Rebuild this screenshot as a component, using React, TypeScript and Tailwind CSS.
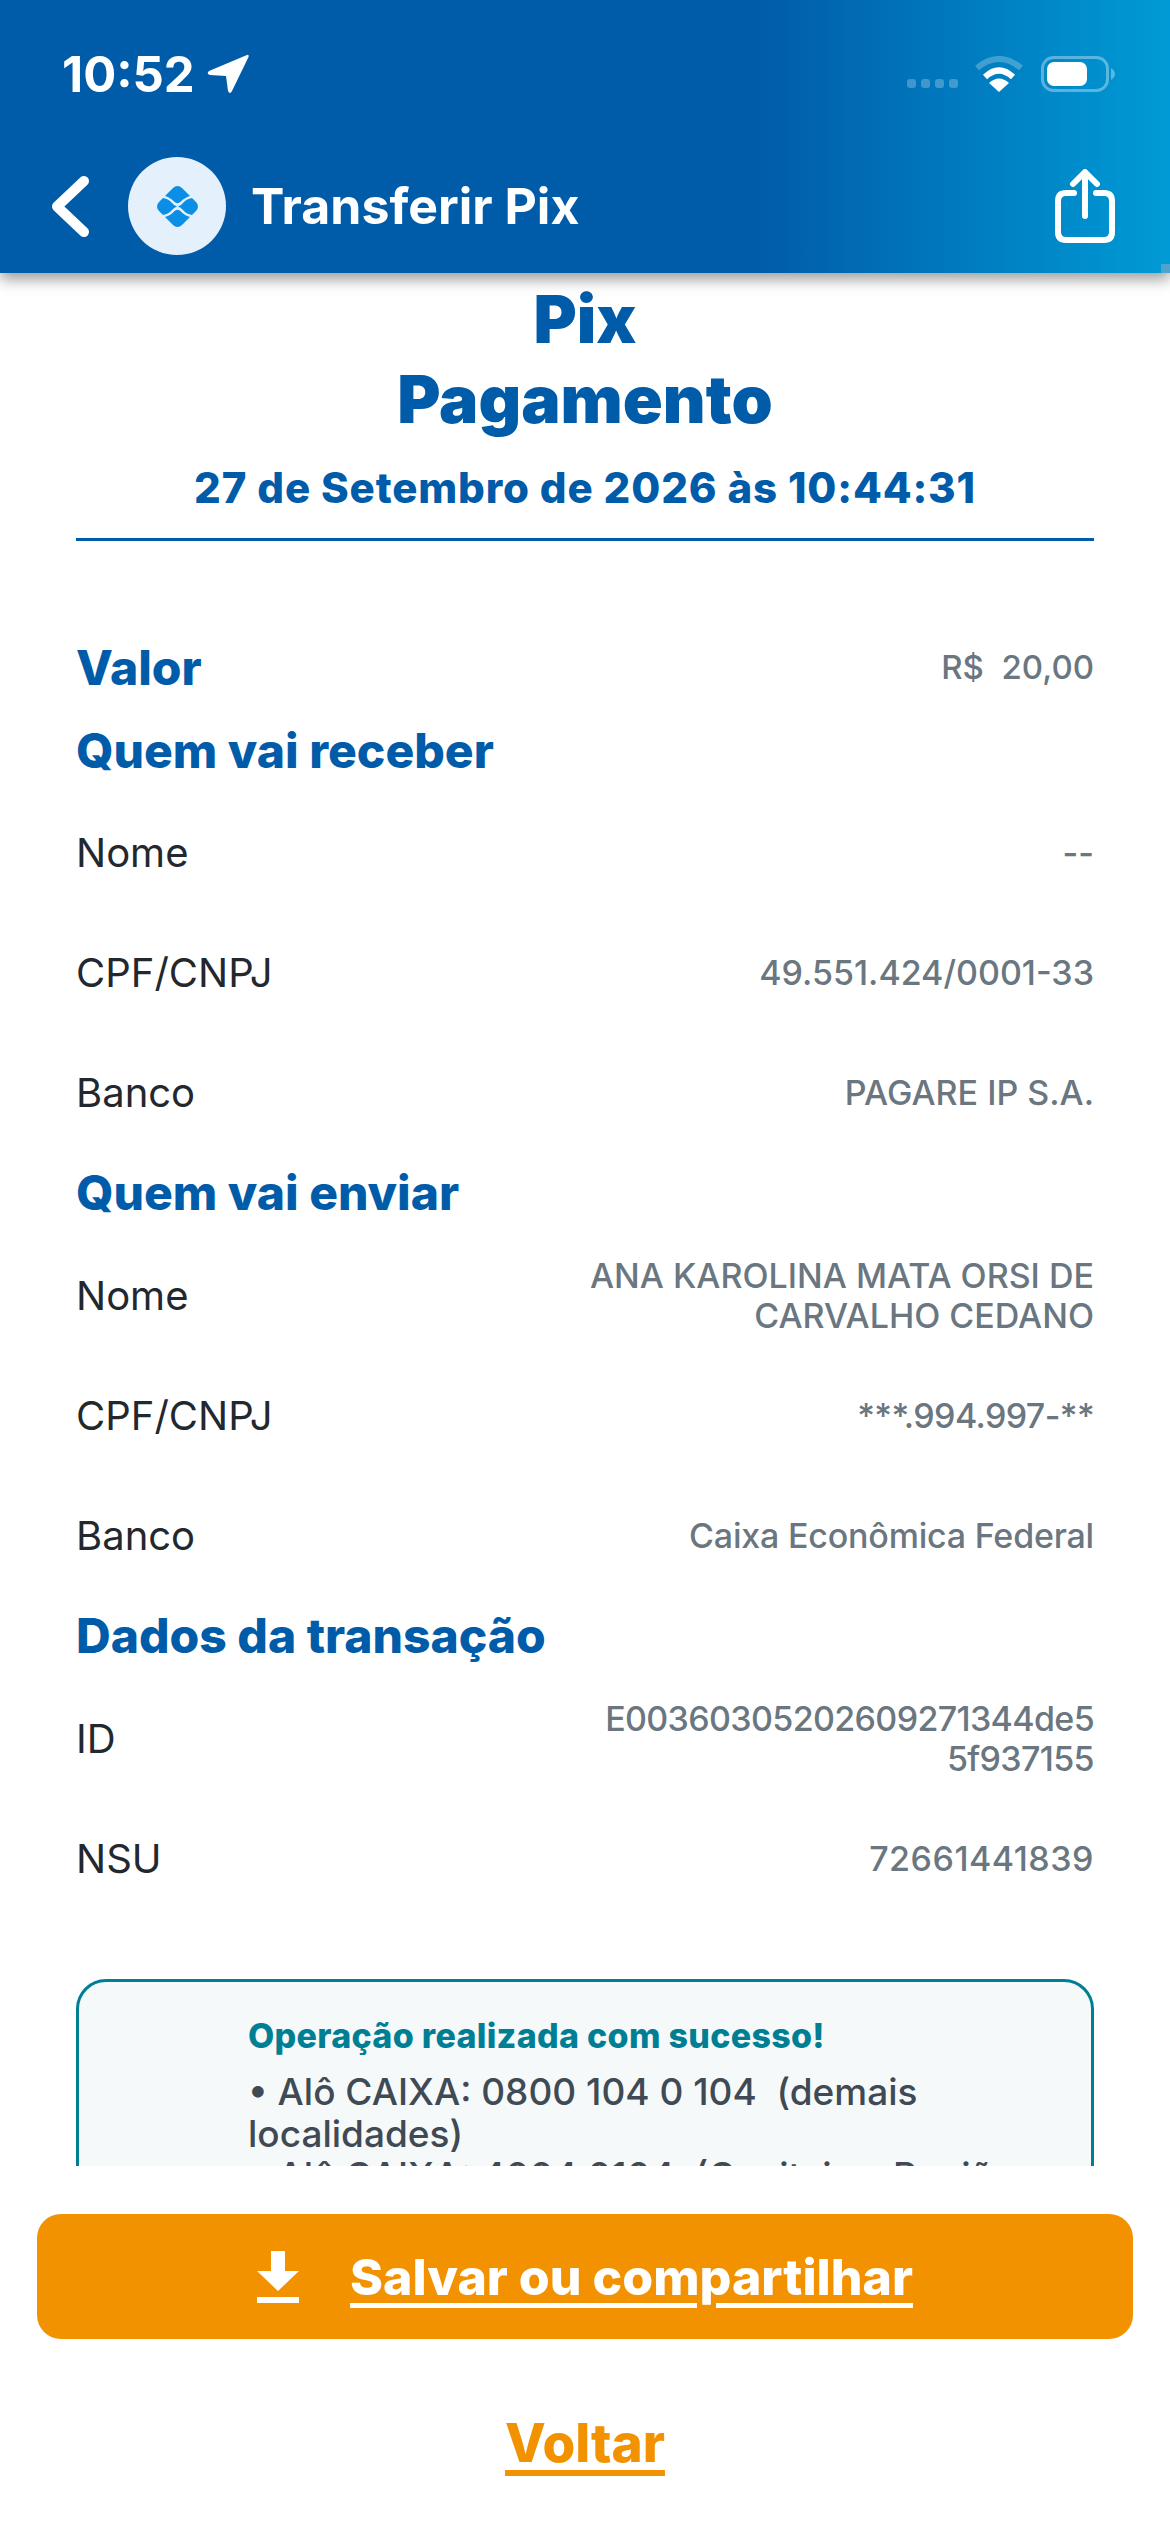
const Row = ({ label, value, cls = "" }: { label: string; value: string; cls?: string }) => (
  <div className="flex h-[120px] items-center justify-between">
    <span className="text-[40px] leading-[48px] text-[#22282e]">{label}</span>
    <span className={`w-[560px] text-right text-[34px] font-medium leading-[40px] text-[#6a7680] ${cls}`}>{value}</span>
  </div>
);

const Section = ({ children }: { children: string }) => (
  <h2 className="text-[48px] font-extrabold leading-[56px] text-[#005ca9]">{children}</h2>
);

export default function App() {
  return (
    <div className="relative flex h-[2532px] w-[1170px] flex-col overflow-hidden bg-white font-['Inter',sans-serif]">
      <header className="relative z-10 h-[273px] shrink-0 bg-gradient-to-r from-[#005ca9] from-65% to-[#009bd6] shadow-[0_6px_14px_rgba(0,0,0,0.4)]">
        <div className="flex h-[122px] items-center justify-between pl-[62px] pr-[55px] pt-[26px]">
          <div className="flex items-center gap-[12px]">
            <span className="text-[49px] font-bold leading-none text-white">10:52</span>
            <svg width="42" height="40" viewBox="0 0 42 40"><path d="M40 1 Q42 0 41.5 3 L25 37 Q23 41 21 37 L19 22 L3 21 Q-1 20 2 17 Z" fill="#fff" /></svg>
          </div>
          <div className="flex items-center">
            <div className="mt-[18px] flex gap-[5px]">
              {[0, 1, 2, 3].map((i) => (
                <span key={i} className="h-[9px] w-[9px] rounded-[3px] bg-white/25" />
              ))}
            </div>
            <svg className="ml-[17px]" width="48" height="37" viewBox="0 0 48 37" fill="none">
              <path d="M2 12 Q24 -6 46 12" stroke="#fff" strokeOpacity="0.25" strokeWidth="6" />
              <path d="M10 21 Q24 8 38 21" stroke="#fff" strokeWidth="6" />
              <path d="M24 36 L14 27 Q24 18 34 27 Z" fill="#fff" />
            </svg>
            <svg className="ml-[18px]" width="74" height="36" viewBox="0 0 74 36" fill="none">
              <rect x="1.5" y="1.5" width="65" height="33" rx="11" stroke="#fff" strokeOpacity="0.35" strokeWidth="3" />
              <rect x="6" y="6" width="40" height="24" rx="7" fill="#fff" />
              <path d="M70 12 Q74 15 74 18 Q74 21 70 24 Z" fill="#fff" fillOpacity="0.35" />
            </svg>
          </div>
        </div>
        <div className="flex h-[122px] items-center justify-between pl-[52px] pr-[55px] pt-[46px]">
          <div className="flex items-center">
            <svg width="37" height="61" viewBox="0 0 37 61" fill="none">
              <path d="M32 5 L5 30.5 L32 56" stroke="#fff" strokeWidth="10" strokeLinecap="round" strokeLinejoin="round" />
            </svg>
            <div className="ml-[39px] flex h-[98px] w-[98px] items-center justify-center rounded-full bg-[#e4f0fc]">
              <svg width="41" height="41" viewBox="0 0 41 41" fill="#0a8ee6">
                <path d="M20.5 0 Q23 0 25 2 L33 10 Q27 12 24 15.5 Q20.5 19 17 15.5 Q14 12 8 10 L16 2 Q18 0 20.5 0 Z" />
                <path d="M20.5 41 Q23 41 25 39 L33 31 Q27 29 24 25.5 Q20.5 22 17 25.5 Q14 29 8 31 L16 39 Q18 41 20.5 41 Z" />
                <path d="M6 12 Q12 13 15 17 Q17.5 20 20 20.5 Q17.5 21 15 24 Q12 28 6 29 L2 25 Q0 23 0 20.5 Q0 18 2 16 Z" />
                <path d="M35 12 Q29 13 26 17 Q23.5 20 21 20.5 Q23.5 21 26 24 Q29 28 35 29 L39 25 Q41 23 41 20.5 Q41 18 39 16 Z" />
              </svg>
            </div>
            <span className="ml-[25px] text-[50px] font-bold leading-none text-white">Transferir Pix</span>
          </div>
          <svg width="60" height="74" viewBox="0 0 60 74" fill="none" stroke="#fff" strokeWidth="6" strokeLinecap="round" strokeLinejoin="round">
            <path d="M19 24 H11 Q3 24 3 32 V63 Q3 71 11 71 H49 Q57 71 57 63 V32 Q57 24 49 24 H41" />
            <path d="M30 47 V4" />
            <path d="M18 15 L30 3 L42 15" />
          </svg>
        </div>
        <span className="absolute bottom-0 right-0 h-[9px] w-[9px] bg-[#4fa3cf]" />
      </header>

      <main className="min-h-0 flex-1 overflow-hidden px-[76px]">
        <div className="pt-[6px] text-center text-[#005ca9]">
          <h1 className="text-[66px] font-black leading-[80px]">Pix</h1>
          <h1 className="text-[66px] font-black leading-[80px]">Pagamento</h1>
          <p className="mt-[21px] text-[42px] font-extrabold leading-[56px] tracking-[0.85px]">27 de Setembro de 2026 às 10:44:31</p>
        </div>
        <div className="mt-[22px] h-[3px] bg-[#005ca9]" />
        <div className="mt-[99px] flex items-center justify-between">
          <Section>Valor</Section>
          <span className="text-[33px] font-medium text-[#6a7680]">R$&nbsp; 20,00</span>
        </div>
        <div className="mt-[27px]"><Section>Quem vai receber</Section></div>
        <div className="mt-[14px]">
          <Row label="Nome" value="--" />
          <Row label="CPF/CNPJ" value="49.551.424/0001-33" />
          <Row label="Banco" value="PAGARE IP S.A." />
        </div>
        <div className="mt-[12px]"><Section>Quem vai enviar</Section></div>
        <div className="mt-[15px]">
          <Row label="Nome" value="ANA KAROLINA MATA ORSI DE CARVALHO CEDANO" />
          <Row label="CPF/CNPJ" value="***.994.997-**" cls="tracking-[-0.6px]" />
          <Row label="Banco" value="Caixa Econômica Federal" cls="tracking-[-0.2px]" />
        </div>
        <div className="mt-[12px]"><Section>Dados da transação</Section></div>
        <div className="mt-[15px]">
          <Row label="ID" value="E00360305202609271344de5 5f937155" cls="tracking-[-0.65px]" />
          <Row label="NSU" value="72661441839" cls="tracking-[0.5px]" />
        </div>
        <div className="mt-[60px] rounded-[30px] border-[3px] border-[#007f94] bg-[#f5f9fa] pl-[169px] pr-[40px] pt-[32px]">
          <p className="text-[34px] font-extrabold leading-[44px] tracking-[0.3px] text-[#007f94]">Operação realizada com sucesso!</p>
          <p className="mt-[13px] text-[37px] font-medium leading-[42px] text-[#3f4a54]">• Alô CAIXA: 0800 104 0 104&nbsp; (demais localidades)</p>
          <p className="text-[37px] font-medium leading-[42px] text-[#3f4a54]">• Alô CAIXA: 4004 0104&nbsp; (Capitais e Regiões Metropolitanas)</p>
        </div>
      </main>

      <footer className="h-[366px] shrink-0 bg-white px-[37px] pt-[48px]">
        <button className="flex h-[125px] w-full items-center justify-center rounded-[24px] bg-[#f39200]">
          <svg width="42" height="52" viewBox="0 0 42 52" fill="#fff">
            <path d="M14 0 H28 V20 H42 L21 40 L0 20 H14 Z" />
            <rect y="46" width="42" height="6" />
          </svg>
          <span className="ml-[51px] text-[50px] font-extrabold leading-none text-white underline decoration-[5px] underline-offset-[8px]">Salvar ou compartilhar</span>
        </button>
        <div className="mt-[76px] text-center">
          <span className="text-[53px] font-extrabold leading-[56px] text-[#f39200] underline decoration-[6px] underline-offset-[8px]">Voltar</span>
        </div>
      </footer>
    </div>
  );
}
